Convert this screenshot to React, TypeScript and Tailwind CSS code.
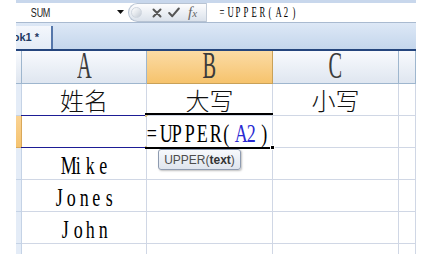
import React from "react";

type Seg = { t: string; c?: string };

function Mono({ segs, cell }: { segs: Seg[]; cell: string }) {
  const out: React.ReactNode[] = [];
  let k = 0;
  segs.forEach((s) => {
    for (const ch of Array.from(s.t)) {
      out.push(
        <span key={k++} className={s.c ? cell + " " + s.c : cell}>
          {ch}
        </span>
      );
    }
  });
  return <span className="inline-flex whitespace-pre">{out}</span>;
}

const BIG = "inline-block w-[12.5px] shrink-0 text-center scale-x-[0.72]";
const SMALL = "inline-block w-[8px] shrink-0 text-center scale-x-[0.62]";
const NAME = "inline-block w-[6px] shrink-0 text-center scale-x-[0.75]";

const SERIF = "font-[family-name:'Liberation_Serif','DejaVu_Serif',serif]";
const SANS = "font-[family-name:'Liberation_Sans',Arial,sans-serif]";
const CJK = "font-[family-name:'Noto_Sans_CJK_SC','Noto_Sans',sans-serif]";

const HEAD = "border-r border-b border-[#9eb6ce] bg-gradient-to-b from-[#f8fafd] to-[#dfe6f0]";
const HEAD_SEL = "border-r border-b border-[#c9a158] bg-gradient-to-b from-[#fbdba4] to-[#f6c36c]";
const CELL = "border-r border-b border-[#d0d7e5] bg-white";
const ROWH = "border-r border-b border-[#c5d3e6] bg-[#e4ecf7]";
const ROWH_SEL = "border-r border-b border-[#d9a85a] bg-gradient-to-b from-[#fad393] to-[#f5c36f]";

function HeaderCell({ label, sel }: { label?: string; sel?: boolean }) {
  return (
    <div className={(sel ? HEAD_SEL : HEAD) + " flex justify-center items-start overflow-visible"}>
      {label ? (
        <span className={SERIF + " text-[37px] leading-none text-[#3b3b3b] -mt-[4px] inline-block scale-x-[0.55]"}>
          {label}
        </span>
      ) : null}
    </div>
  );
}

function LatinCell({ text }: { text: string }) {
  return (
    <div className={CELL + " flex justify-center items-start pt-[5px]"}>
      <span className={SERIF + " text-[25px] leading-none text-black"}>
        <Mono segs={[{ t: text }]} cell={BIG} />
      </span>
    </div>
  );
}

function CjkCell({ text }: { text: string }) {
  return (
    <div className={CELL + " flex justify-center items-center"}>
      <span className={CJK + " font-light text-[24px] leading-none text-[#111]"}>{text}</span>
    </div>
  );
}

export default function App() {
  return (
    <div className="w-[432px] h-[254px] overflow-hidden bg-white pl-[16px]">
      <div className="w-[400px] h-[254px] flex flex-col">
        {/* top strip */}
        <div className="h-[3px] bg-[#c8d7ec] shrink-0" />
        {/* formula bar */}
        <div className="h-[20px] shrink-0 flex border-b border-[#a9bad0] bg-white">
          <div className="w-[112px] flex items-center pl-[14px] relative">
            <span className={SANS + " text-[12px] leading-none text-[#222]"}>
              <Mono segs={[{ t: "SUM" }]} cell={NAME} />
            </span>
            <svg className="absolute left-[101px] top-[7px]" width="7" height="4" viewBox="0 0 7 4">
              <path d="M0 0 L7 0 L3.5 4 Z" fill="#111" />
            </svg>
          </div>
          <div className="w-[78px] h-full rounded-l-full border border-r-0 border-[#b7c3d3] bg-gradient-to-b from-[#fdfdfe] to-[#dbe2eb] flex items-center">
            <div className="ml-[2px] w-[11px] h-[11px] rounded-full border border-[#cfd6df] bg-gradient-to-br from-[#ffffff] via-[#e3e7ec] to-[#c3cad4]" />
            <svg className="ml-[10px]" width="10" height="10" viewBox="0 0 10 10">
              <path d="M1.5 1.5 L8.5 8.5 M8.5 1.5 L1.5 8.5" stroke="#555" strokeWidth="2" strokeLinecap="round" />
            </svg>
            <svg className="ml-[6px]" width="12" height="11" viewBox="0 0 12 11">
              <path d="M1.2 6 L4.3 9.2 L10.8 1.5" stroke="#555" strokeWidth="2" fill="none" strokeLinecap="round" strokeLinejoin="round" />
            </svg>
            <span className={SERIF + " ml-[8px] italic text-[15px] leading-none text-[#666]"}>
              f<span className="text-[11px]">x</span>
            </span>
          </div>
          <div className="flex-1 flex items-center pl-[11px] border-l border-[#c3ccd8]">
            <span className={SERIF + " text-[14px] leading-none text-black"}>
              <Mono segs={[{ t: "=UPPER(A2)" }]} cell={SMALL} />
            </span>
          </div>
        </div>
        {/* tab bar */}
        <div className="h-[26px] shrink-0 flex bg-gradient-to-b from-[#dde8f6] to-[#c4d6ec]">
          <div className="w-[37px] h-full pt-[3px] flex">
            <div className="flex-1 border-r-2 border-[#5476aa] bg-gradient-to-b from-[#f4f7fc] to-[#e3ebf6] overflow-hidden flex items-center">
              <span className={SANS + " -ml-[18px] font-bold text-[11px] leading-none text-[#1e3a63] whitespace-pre"}>
                Book1 *
              </span>
            </div>
          </div>
        </div>
        <div className="h-[2px] shrink-0 bg-[#24457d]" />
        {/* grid */}
        <div className="grid grid-cols-[6px_125px_126px_126px_17px] grid-rows-[33px_32px_32px_32px_32px_32px_32px]">
          {/* header */}
          <HeaderCell />
          <HeaderCell label="A" />
          <HeaderCell label="B" sel />
          <HeaderCell label="C" />
          <HeaderCell />

          {/* row 1 */}
          <div className={ROWH} />
          <CjkCell text="姓名" />
          <CjkCell text="大写" />
          <CjkCell text="小写" />
          <div className={CELL} />

          {/* row 2 */}
          <div className={ROWH_SEL} />
          <div className={CELL + " relative"}>
            <div className="absolute -top-[1px] -left-[1px] right-0 -bottom-[1px] border-t border-b border-[#1d1d95]" />
            <div className="absolute -top-[2px] -right-[2px] w-[3px] h-[3px] bg-[#d6c28f]" />
            <div className="absolute -bottom-[2px] -right-[2px] w-[3px] h-[3px] bg-[#d6c28f]" />
          </div>
          <div className={CELL + " relative flex justify-start items-start pt-[5px]"}>
            <span className={SERIF + " -ml-[2px] text-[25px] leading-none text-black"}>
              <Mono
                segs={[{ t: "=UPPER(" }, { t: "A2", c: "text-[#2a2ad2]" }, { t: ")" }]}
                cell={BIG}
              />
            </span>
            <div className="absolute -top-[3px] -left-[2px] -right-[1px] h-[2px] bg-black" />
            <div className="absolute -bottom-[2px] -left-[2px] right-[1px] h-[2px] bg-black" />
            <div className="absolute -bottom-[3px] -right-[3px] w-[5px] h-[5px] bg-black border border-white" />
            <div className="absolute left-[11px] top-[33px] w-[83px] h-[21px] rounded-[3px] border border-[#8e9bb0] bg-gradient-to-b from-[#f7f9fc] to-[#dfe5ee] shadow-[1px_1px_2px_rgba(0,0,0,0.25)] flex items-center justify-center z-10">
              <span className={SANS + " text-[12px] leading-none text-[#4d4d4d] whitespace-pre"}>
                UPPER(<span className="font-bold text-[#333]">text</span>)
              </span>
            </div>
          </div>
          <div className={CELL} />
          <div className={CELL} />

          {/* rows 3-5 */}
          <div className={ROWH} />
          <LatinCell text="Mike" />
          <div className={CELL} />
          <div className={CELL} />
          <div className={CELL} />

          <div className={ROWH} />
          <LatinCell text="Jones" />
          <div className={CELL} />
          <div className={CELL} />
          <div className={CELL} />

          <div className={ROWH} />
          <LatinCell text="John" />
          <div className={CELL} />
          <div className={CELL} />
          <div className={CELL} />

          <div className={ROWH} />
          <div className={CELL} />
          <div className={CELL} />
          <div className={CELL} />
          <div className={CELL} />
        </div>
      </div>
    </div>
  );
}
